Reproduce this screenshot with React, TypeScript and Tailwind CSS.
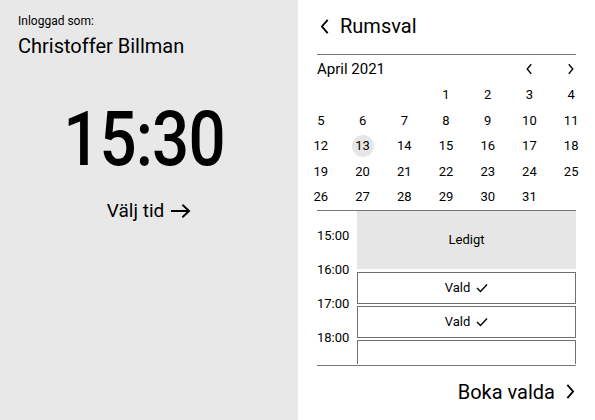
import React from 'react';

const font = { fontFamily: 'Roboto, "Liberation Sans", sans-serif' };

const Chevron = ({ dir, className }: { dir: 'left' | 'right'; className?: string }) => (
  <svg viewBox="0 0 12 20" className={className} fill="none" stroke="currentColor" strokeWidth={2.2} strokeLinecap="square">
    {dir === 'left' ? <path d="M9 3 L3 10 L9 17" /> : <path d="M3 3 L9 10 L3 17" />}
  </svg>
);

const Check = () => (
  <svg viewBox="0 0 12 10" className="w-[12px] h-[10px] ml-[6px]" fill="none" stroke="currentColor" strokeWidth={1.4}>
    <path d="M1 5 L4.5 8.5 L11 1.5" />
  </svg>
);

const weeks: (number | null)[][] = [
  [null, null, null, 1, 2, 3, 4],
  [5, 6, 7, 8, 9, 10, 11],
  [12, 13, 14, 15, 16, 17, 18],
  [19, 20, 21, 22, 23, 24, 25],
  [26, 27, 28, 29, 30, 31, null],
];

export default function App() {
  return (
    <div className="w-[595px] h-[420px] flex text-black overflow-hidden" style={font}>
      {/* Left panel */}
      <div className="w-[298px] shrink-0 h-full bg-[#e8e8e8] flex flex-col px-[18px]">
        <div className="mt-[13px] text-[12px] leading-[16px]">Inloggad som:</div>
        <div className="mt-[5px] text-[20px] leading-[24px]">Christoffer Billman</div>
        <div className="mt-[39px] self-center text-[76px] leading-[84px] font-medium tracking-[-1px] scale-x-[0.86] -ml-[10px]">15:30</div>
        <div className="mt-[18px] self-center flex items-center text-[19px] leading-[24px]">
          Välj tid
          <svg viewBox="0 0 22 16" className="w-[21px] h-[16px] ml-[6px]" fill="none" stroke="currentColor" strokeWidth={2}>
            <path d="M1 8 H20 M13 1.5 L20 8 L13 14.5" />
          </svg>
        </div>
      </div>

      {/* Right panel */}
      <div className="w-[297px] shrink-0 min-w-0 h-full bg-white flex flex-col px-[19px]">
        <div className="mt-[14px] flex items-center h-[24px]">
          <Chevron dir="left" className="w-[11px] h-[17px] ml-[2px]" />
          <span className="ml-[10px] text-[20px] leading-[24px]">Rumsval</span>
        </div>
        <div className="mt-[16px] border-t border-[#777]" />
        <div className="mt-[5px] flex items-center h-[18px]">
          <span className="text-[15px] leading-[18px]">April 2021</span>
          <Chevron dir="left" className="w-[8px] h-[12px] ml-auto mr-[34px]" />
          <Chevron dir="right" className="w-[8px] h-[12px] mr-[1px]" />
        </div>
        <div className="mt-[4px] -ml-[17px] w-[292px] text-[13px]">
          {weeks.map((w, i) => (
            <div key={i} className="grid grid-cols-7 h-[25.5px] items-center">
              {w.map((d, j) => (
                <div key={j} className="flex justify-center">
                  {d === 13 ? (
                    <span className="w-[22px] h-[22px] rounded-full bg-[#e6e6e6] flex items-center justify-center">{d}</span>
                  ) : (
                    <span>{d ?? ''}</span>
                  )}
                </div>
              ))}
            </div>
          ))}
        </div>
        <div className="border-t border-[#777] border-b flex">
          <div className="w-[40px] pt-[18px] flex flex-col text-[13px]">
            {['15:00', '16:00', '17:00', '18:00'].map((t) => (
              <div key={t} className="h-[34px] leading-[14px]">{t}</div>
            ))}
          </div>
          <div className="flex-1 flex flex-col text-[13px]">
            <div className="h-[58px] bg-[#e6e6e6] flex items-center justify-center">Ledigt</div>
            <div className="mt-[3px] h-[32px] border border-[#707070] flex items-center justify-center">
              Vald <Check />
            </div>
            <div className="mt-[2px] h-[32px] border border-[#707070] flex items-center justify-center">
              Vald <Check />
            </div>
            <div className="mt-[2px] h-[24px] border-x border-t border-[#707070]" />
          </div>
        </div>
        <div className="mt-[14px] self-end flex items-center h-[24px]">
          <span className="text-[20px] leading-[24px]">Boka valda</span>
          <Chevron dir="right" className="w-[11px] h-[17px] ml-[10px]" />
        </div>
      </div>
    </div>
  );
}
